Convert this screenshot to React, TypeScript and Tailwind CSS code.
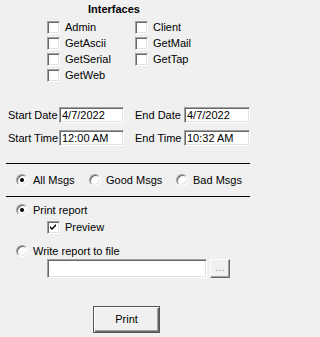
import React from "react";

function CheckBox({ checked = false }: { checked?: boolean }) {
  return (
    <span className="box-border flex h-[13px] w-[13px] shrink-0 items-center justify-center border border-t-[#a0a0a0] border-l-[#a0a0a0] border-b-white border-r-white bg-white shadow-[inset_1px_1px_0_#696969,inset_-1px_-1px_0_#e3e3e3]">
      {checked && (
        <svg width="7" height="7" viewBox="0 0 7 7" className="block">
          <path d="M0 2 L2 4 L6 0 L6 2 L2 6 L0 4 Z" fill="#000" />
        </svg>
      )}
    </span>
  );
}

function Radio({ checked = false }: { checked?: boolean }) {
  return (
    <span className="box-border flex h-[12px] w-[12px] shrink-0 items-center justify-center rounded-full border border-t-[#a0a0a0] border-l-[#a0a0a0] border-b-white border-r-white bg-white shadow-[inset_1px_1px_0_#696969,inset_-1px_-1px_0_#e3e3e3]">
      {checked && <span className="block h-[4px] w-[4px] rounded-full bg-black" />}
    </span>
  );
}

function Field({ value, className = "" }: { value: string; className?: string }) {
  return (
    <div
      className={`box-border flex items-center border border-t-[#a0a0a0] border-l-[#a0a0a0] border-b-white border-r-white bg-white pl-[2px] shadow-[inset_1px_1px_0_#696969,inset_-1px_-1px_0_#e3e3e3] ${className}`}
    >
      {value}
    </div>
  );
}

const checks = [
  ["Admin", "Client"],
  ["GetAscii", "GetMail"],
  ["GetSerial", "GetTap"],
  ["GetWeb", ""],
];

export default function App() {
  return (
    <div className="h-[337px] w-full min-w-[251px] overflow-hidden bg-[#f0f0f0] font-['Liberation_Sans',Arial,sans-serif] text-[11px] leading-[13px] text-black">
      <div className="pl-[88px] pt-[3px] font-bold">Interfaces</div>

      <div className="ml-[47px] mt-[4px] grid w-[160px] grid-cols-[88px_auto]">
        {checks.flatMap((row) =>
          row.map((label, i) => (
            <div key={label || `empty-${i}`} className="flex h-[16px] items-start gap-[5px] pt-[1px]">
              {label && (
                <>
                  <CheckBox />
                  <span>{label}</span>
                </>
              )}
            </div>
          ))
        )}
      </div>

      <div className="mt-[23px] flex h-[16px] items-center pl-[8px]">
        <span className="w-[51px]">Start Date</span>
        <Field value="4/7/2022" className="h-[16px] w-[65px]" />
        <span className="ml-[11px] w-[49px]">End Date</span>
        <Field value="4/7/2022" className="h-[16px] w-[66px]" />
      </div>
      <div className="mt-[7px] flex h-[16px] items-center pl-[8px]">
        <span className="w-[51px]">Start Time</span>
        <Field value="12:00 AM" className="h-[16px] w-[65px]" />
        <span className="ml-[11px] w-[49px]">End Time</span>
        <Field value="10:32 AM" className="h-[16px] w-[66px]" />
      </div>

      <div className="ml-[6px] mt-[17px] h-px w-[244px] bg-black" />

      <div className="mt-[10px] flex h-[12px] items-center pl-[16px]">
        <div className="flex w-[73px] items-center gap-[5px]">
          <Radio checked />
          <span>All Msgs</span>
        </div>
        <div className="flex w-[87px] items-center gap-[5px]">
          <Radio />
          <span>Good Msgs</span>
        </div>
        <div className="flex items-center gap-[5px]">
          <Radio />
          <span>Bad Msgs</span>
        </div>
      </div>

      <div className="ml-[6px] mt-[10px] h-px w-[244px] bg-black" />

      <div className="ml-[16px] mt-[7px] flex h-[12px] items-center gap-[5px]">
        <Radio checked />
        <span>Print report</span>
      </div>
      <div className="ml-[47px] mt-[5px] flex h-[13px] items-center gap-[5px]">
        <CheckBox checked />
        <span>Preview</span>
      </div>
      <div className="ml-[16px] mt-[11px] flex h-[12px] items-center gap-[5px]">
        <Radio />
        <span>Write report to file</span>
      </div>
      <div className="ml-[47px] mt-[2px] flex h-[19px] items-stretch gap-[3px]">
        <Field value="" className="w-[160px]" />
        <button className="box-border flex w-[20px] items-center justify-center border border-t-white border-l-white border-b-[#696969] border-r-[#696969] bg-[#f0f0f0] pb-[2px] text-[#a0a0a0] shadow-[inset_-1px_-1px_0_#a0a0a0]">
          ...
        </button>
      </div>

      <div className="ml-[93px] mt-[28px]">
        <button className="box-border h-[27px] w-[67px] border border-[#555] bg-[#f0f0f0] shadow-[inset_1px_1px_0_#fff,inset_-1px_-1px_0_#696969,inset_-2px_-2px_0_#a0a0a0]">
          Print
        </button>
      </div>
    </div>
  );
}
